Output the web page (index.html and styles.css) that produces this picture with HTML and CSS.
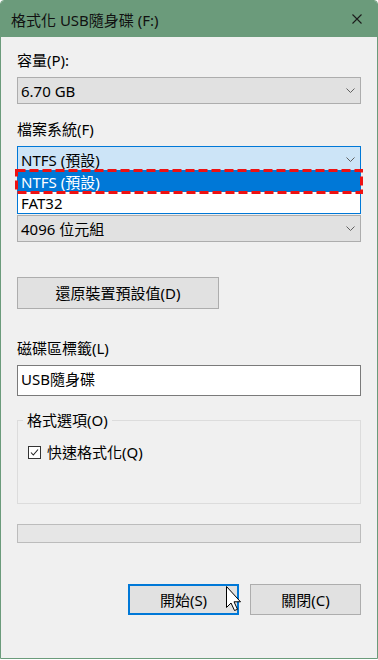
FILE: index.html
```html
<!DOCTYPE html>
<html lang="zh-Hant">
<head>
<meta charset="utf-8">
<title>格式化 USB隨身碟 (F:)</title>
<link rel="stylesheet" href="styles.css">
</head>
<body>
<div class="window">
  <div class="titlebar">
    <span class="title">格式化 USB隨身碟 (F:)</span>
    <svg class="close" width="10" height="10" viewBox="0 0 10 10"><path d="M0.5 0.5 L9.5 9.5 M9.5 0.5 L0.5 9.5" stroke="#1b1b1b" stroke-width="1.1" fill="none"/></svg>
  </div>
  <div class="content">
    <div class="field">
      <div class="label">容量(P):</div>
      <div class="combo"><span>6.70 GB</span><svg class="chev" width="9" height="5" viewBox="0 0 9 5"><polyline points="0.5,0.5 4.5,4.5 8.5,0.5" fill="none" stroke="#606060" stroke-width="1"/></svg></div>
    </div>
    <div class="field">
      <div class="label">檔案系統(F)</div>
      <div class="combo-wrap">
        <div class="combo focus"><span>NTFS (預設)</span><svg class="chev" width="9" height="5" viewBox="0 0 9 5"><polyline points="0.5,0.5 4.5,4.5 8.5,0.5" fill="none" stroke="#606060" stroke-width="1"/></svg></div>
        <ul class="dropdown">
          <li class="selected">NTFS (預設)</li>
          <li>FAT32</li>
        </ul>
        <svg class="mark" width="348" height="25" viewBox="0 0 348 25"><rect x="1.5" y="1.5" width="345" height="22" fill="none" stroke="#ee1111" stroke-width="3" stroke-dasharray="9 4"/></svg>
      </div>
    </div>
    <div class="field">
      <div class="label covered">配置單位大小(A)</div>
      <div class="combo"><span>4096 位元組</span><svg class="chev" width="9" height="5" viewBox="0 0 9 5"><polyline points="0.5,0.5 4.5,4.5 8.5,0.5" fill="none" stroke="#606060" stroke-width="1"/></svg></div>
    </div>
    <button class="btn restore">還原裝置預設值(D)</button>
    <div class="field volume">
      <div class="label">磁碟區標籤(L)</div>
      <div class="textbox">USB隨身碟</div>
    </div>
    <fieldset class="group">
      <legend>格式選項(O)</legend>
      <div class="check">
        <svg width="13" height="13" viewBox="0 0 13 13"><rect x="0.5" y="0.5" width="12" height="12" fill="#fff" stroke="#333" stroke-width="1"/><polyline points="3,6.5 5.3,9 10,3.5" fill="none" stroke="#222" stroke-width="1.1"/></svg>
        <span>快速格式化(Q)</span>
      </div>
    </fieldset>
    <div class="progress"></div>
    <div class="actions">
      <button class="btn primary">開始(S)</button>
      <button class="btn">關閉(C)</button>
    </div>
  </div>
  <svg class="cursor" width="16" height="26" viewBox="0 0 16 26"><path d="M0.5 0.5 V21.5 L5 17 L8.5 24.5 L11.5 23.3 L8 15.8 H14.5 Z" fill="#fff" stroke="#000" stroke-width="1" stroke-linejoin="miter"/></svg>
</div>
</body>
</html>
```
FILE: styles.css
```css
* { box-sizing: border-box; }
html, body { margin: 0; padding: 0; }
body {
  background: #ffffff;
  font-family: "Noto Sans", "Noto Sans CJK TC", sans-serif;
  font-size: 15px;
  color: #000;
}
.window {
  position: relative;
  width: 378px;
  height: 659px;
  border: 1px solid #6b9b7b;
  border-radius: 4px 4px 0 0;
  background: #f0f0f0;
  overflow: hidden;
}
.titlebar {
  height: 36px;
  background: #6b9b7b;
  display: flex;
  align-items: center;
  justify-content: space-between;
  padding: 0 15px 0 10px;
}
.title {
  line-height: 20px;
  padding-top: 2px;
  white-space: nowrap;
  color: #111;
}
.close { display: block; }
.content {
  padding: 13px 16px 0;
}
.label {
  line-height: 20px;
  margin-bottom: 7px;
  white-space: nowrap;
}
.label.covered { visibility: hidden; }
.field + .field { margin-top: 15px; }
.combo {
  height: 27px;
  border: 1px solid #adadad;
  background: #e1e1e1;
  display: flex;
  align-items: center;
  justify-content: space-between;
  padding: 0 5px 0 3px;
  line-height: 20px;
  white-space: nowrap;
}
.combo.focus {
  background: #cce4f7;
  border-color: #0078d7;
}
.chev { display: block; }
.combo-wrap { position: relative; }
.dropdown {
  position: absolute;
  top: 24px;
  left: 0;
  width: 344px;
  height: 44px;
  margin: 0;
  padding: 0;
  list-style: none;
  border: 1px solid #0078d7;
  background: #fff;
  z-index: 2;
}
.dropdown li {
  height: 21px;
  line-height: 22px;
  padding-left: 3px;
  white-space: nowrap;
}
.dropdown li.selected {
  background: #0078d7;
  color: #fff;
}
.mark {
  position: absolute;
  left: -2px;
  top: 23px;
  z-index: 3;
}
.btn {
  font: inherit;
  color: #000;
  border: 1px solid #adadad;
  background: #e1e1e1;
  padding: 0;
  margin: 0;
  display: block;
  line-height: 20px;
  white-space: nowrap;
}
.restore {
  margin-top: 35px;
  width: 202px;
  height: 32px;
}
.field.volume { margin-top: 29px; }
.textbox {
  height: 31px;
  border: 1px solid #7a7a7a;
  background: #fff;
  padding-left: 3px;
  line-height: 27px;
  white-space: nowrap;
}
.group {
  margin: 14px 0 0;
  padding: 0 5px;
  border: 1px solid #dcdcdc;
  height: 94px;
  min-width: 0;
}
.group legend {
  padding: 0 4px;
  line-height: 20px;
}
.check {
  margin-top: 12px;
  padding-left: 5px;
  display: flex;
  align-items: center;
  gap: 6px;
  line-height: 20px;
}
.check svg { display: block; }
.progress {
  margin-top: 20px;
  height: 19px;
  border: 1px solid #bcbcbc;
  background: #e6e6e6;
}
.actions {
  margin-top: 41px;
  display: flex;
  justify-content: flex-end;
  gap: 11px;
}
.actions .btn {
  width: 111px;
  height: 31px;
}
.btn.primary {
  border: 2px solid #0078d7;
}
.cursor {
  position: absolute;
  left: 225px;
  top: 585px;
  z-index: 5;
}
```
